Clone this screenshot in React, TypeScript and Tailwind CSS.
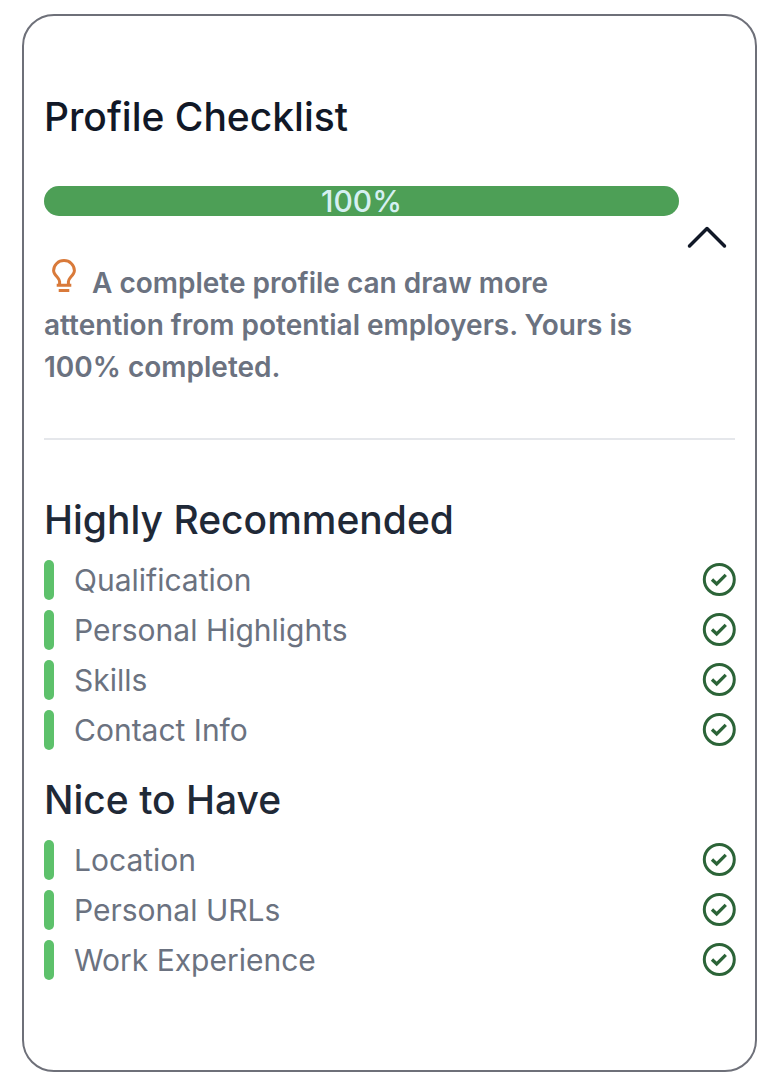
import { useState } from "react";

const sections = [
  {
    title: "Highly Recommended",
    items: ["Qualification", "Personal Highlights", "Skills", "Contact Info"],
  },
  {
    title: "Nice to Have",
    items: ["Location", "Personal URLs", "Work Experience"],
  },
];

function BulbIcon() {
  return (
    <svg className="-mt-2 mr-4 ml-2 inline-block h-[34px] w-6 align-baseline" viewBox="0 0 24 34" fill="none" stroke="#d97a3a" strokeWidth="3">
      <path d="M7.600 26v-3.400c0-1.600-.8-2.500-2.200-4.300C3 15.800 1.600 14 1.600 11.500A10.400 10 0 0 1 12 1.600a10.400 10 0 0 1 10.400 9.900c0 2.500-1.400 4.300-3.800 6.800-1.400 1.800-2.200 2.700-2.200 4.300V26" />
      <path d="M4.700 26.300h14.600M6.700 31.500h10.600" />
    </svg>
  );
}

function CheckIcon() {
  return (
    <svg className="h-[34px] w-[34px] shrink-0 overflow-visible" viewBox="0 0 34 34" fill="none" stroke="#2c6438" strokeWidth="3">
      <circle cx="18.300" cy="16.500" r="15" />
      <path d="M11 16.500l4.700 4.500L24.800 11.900" strokeWidth="3.300" />
    </svg>
  );
}

function ChecklistItem({ name }: { name: string }) {
  return (
    <li className="flex h-10 items-center">
      <span className="h-10 w-2.5 shrink-0 rounded-full bg-[#5dc16b]" />
      <span className="ml-5 flex-1 text-[30px] leading-10 text-[#6b7280]">{name}</span>
      <CheckIcon />
    </li>
  );
}

export default function App() {
  const [open, setOpen] = useState(true);
  const progress = 100;
  const tip = `A complete profile can draw more attention from potential employers. Yours is ${progress}% completed.`;

  return (
    <div className="bg-white pt-3.5 pr-[21px] pb-4 pl-[22px] font-['Inter',sans-serif]">
      <div className="rounded-[32px] border-2 border-[#6e7079] px-5 pt-5 pb-[90px]">
        <div className="flex items-center border-b-2 border-gray-200 pt-[57px] pb-[50px]">
          <div className="flex-1">
            <h1 className="text-[39px] leading-[48px] font-medium text-[#111827]">Profile Checklist</h1>
            <div className="mt-[45px] h-[30px] rounded-full bg-gray-200">
              <div
                className="h-full rounded-full bg-[#4d9f56] text-center text-[30px] leading-[30px] font-medium text-[#d5f0f2]"
                style={{ width: `${progress}%` }}
              >
                {progress}%
              </div>
            </div>
            <p className="mt-[46px] pr-8 text-[28px] leading-[42px] font-semibold text-[#6b7280]">
              <BulbIcon />
              {tip}
            </p>
          </div>
          <button type="button" aria-label="Toggle checklist" aria-expanded={open} className="w-14 shrink-0 pl-2" onClick={() => setOpen(!open)}>
            <svg className={open ? "h-10 w-10" : "h-10 w-10 rotate-180"} viewBox="0 0 40 40" fill="none" stroke="#111827" strokeWidth="3.500" strokeLinecap="round" strokeLinejoin="round">
              <path d="M2.500 25L20 7.500 37.500 25" />
            </svg>
          </button>
        </div>

        {open && (
          <div className="space-y-5 pt-[50px]">
            {sections.map((section) => (
              <section key={section.title}>
                <h2 className="text-[39px] leading-[60px] font-medium text-[#1f2937]">{section.title}</h2>
                <ul className="mt-2.5 space-y-2.5">
                  {section.items.map((item) => (
                    <ChecklistItem key={item} name={item} />
                  ))}
                </ul>
              </section>
            ))}
          </div>
        )}
      </div>
    </div>
  );
}
